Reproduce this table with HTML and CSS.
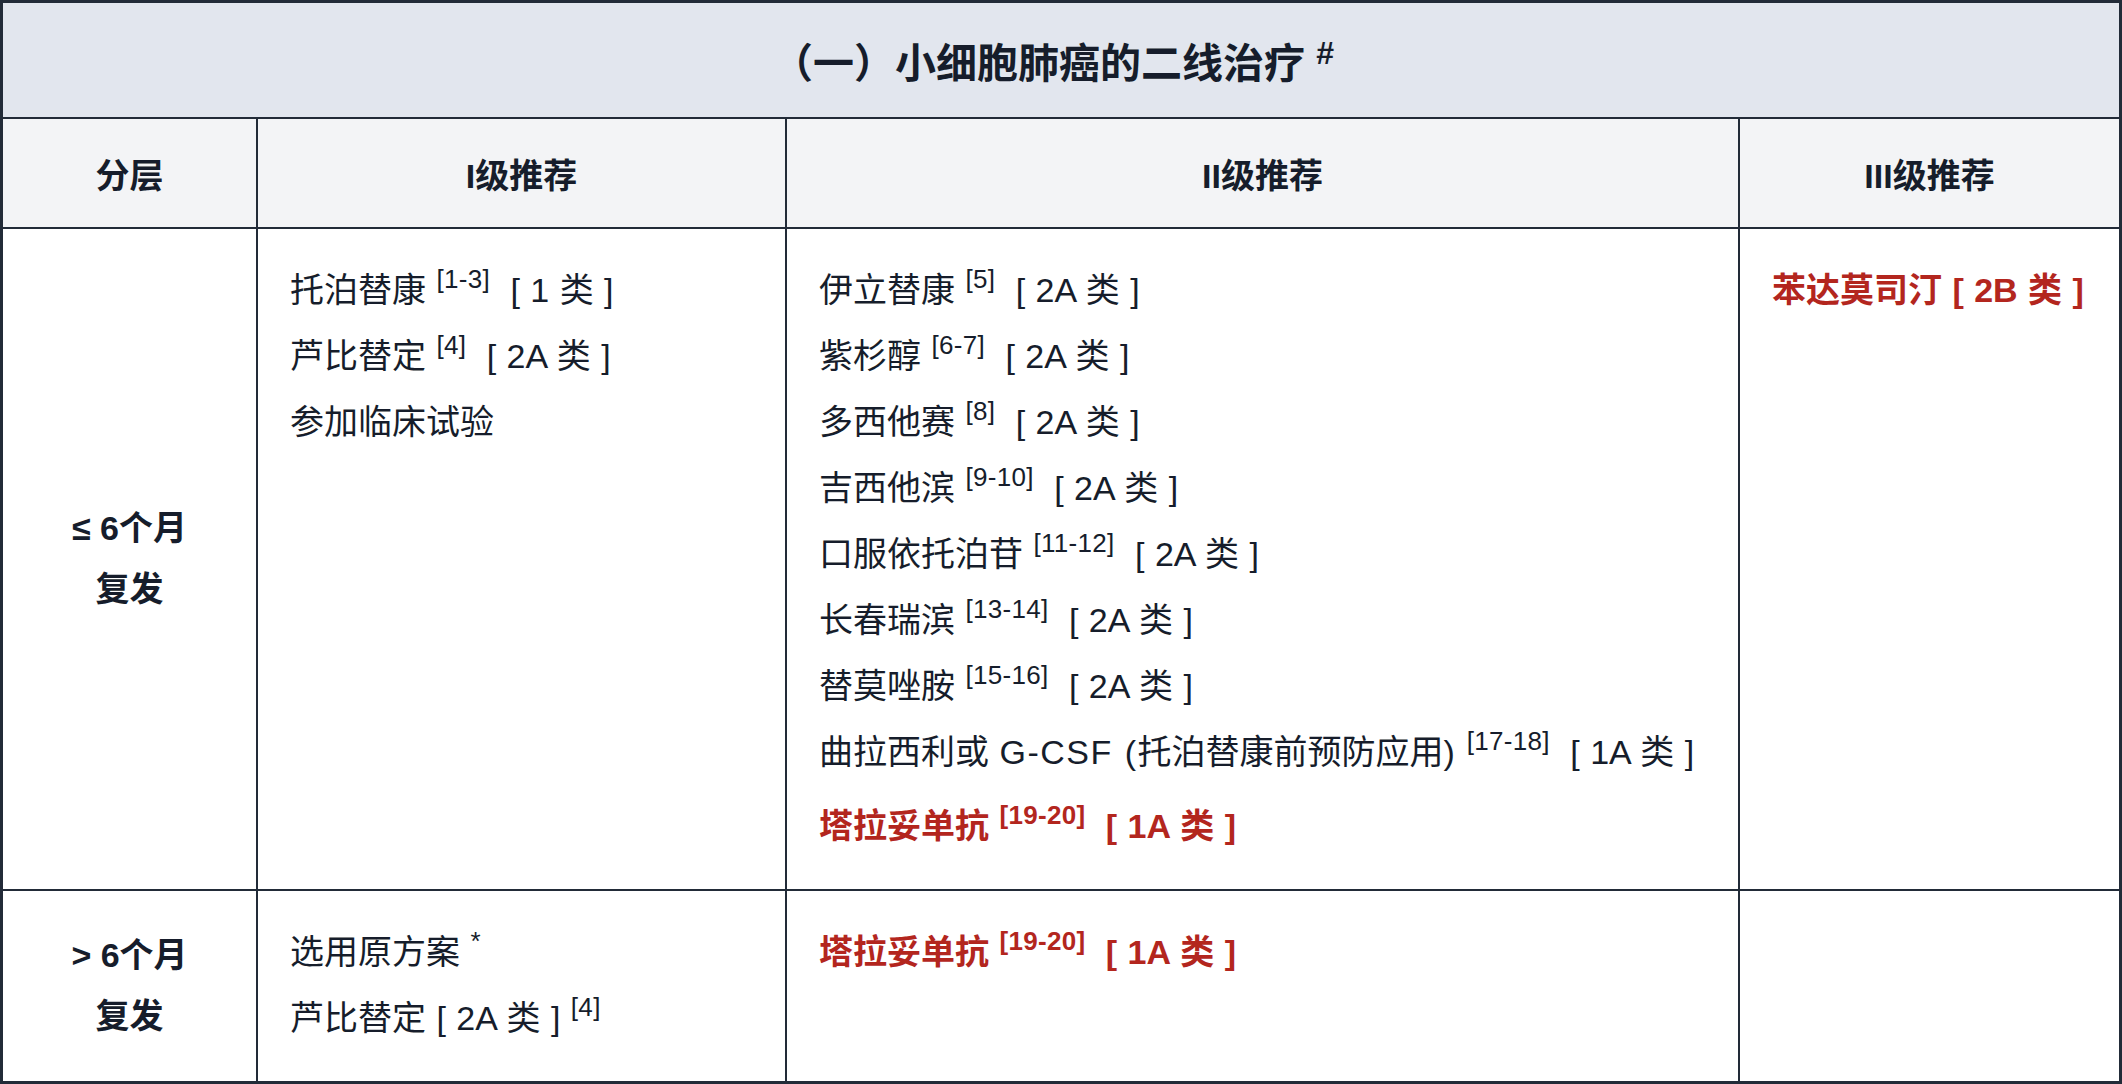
FILE: index.html
```html
<!DOCTYPE html>
<html lang="zh-CN">
<head>
<meta charset="utf-8">
<title>小细胞肺癌的二线治疗</title>
<link rel="stylesheet" href="styles.css">
</head>
<body>
<table class="rec">
  <colgroup>
    <col class="c1"><col class="c2"><col class="c3"><col class="c4">
  </colgroup>
  <thead>
    <tr class="title-row">
      <th colspan="4" class="title">（一）小细胞肺癌的二线治疗 <sup>#</sup></th>
    </tr>
    <tr class="head-row">
      <th>分层</th>
      <th>I级推荐</th>
      <th>II级推荐</th>
      <th>III级推荐</th>
    </tr>
  </thead>
  <tbody>
    <tr>
      <td class="strat"><div class="sl">≤ 6个月</div><div class="sl">复发</div></td>
      <td class="list">
        <div class="item">托泊替康 <sup>[1-3]</sup> [ 1 类 ]</div>
        <div class="item">芦比替定 <sup>[4]</sup> [ 2A 类 ]</div>
        <div class="item">参加临床试验</div>
      </td>
      <td class="list">
        <div class="item">伊立替康 <sup>[5]</sup> [ 2A 类 ]</div>
        <div class="item">紫杉醇 <sup>[6-7]</sup> [ 2A 类 ]</div>
        <div class="item">多西他赛 <sup>[8]</sup> [ 2A 类 ]</div>
        <div class="item">吉西他滨 <sup>[9-10]</sup> [ 2A 类 ]</div>
        <div class="item">口服依托泊苷 <sup>[11-12]</sup> [ 2A 类 ]</div>
        <div class="item">长春瑞滨 <sup>[13-14]</sup> [ 2A 类 ]</div>
        <div class="item">替莫唑胺 <sup>[15-16]</sup> [ 2A 类 ]</div>
        <div class="item">曲拉西利或 <span class="lat">G-CSF (</span>托泊替康前预防应用<span class="lat">)</span> <sup>[17-18]</sup> [ 1A 类 ]</div>
        <div class="item hl">塔拉妥单抗 <sup>[19-20]</sup> [ 1A 类 ]</div>
      </td>
      <td class="list">
        <div class="item hl">苯达莫司汀 [ 2B 类 ]</div>
      </td>
    </tr>
    <tr>
      <td class="strat"><div class="sl">&gt; 6个月</div><div class="sl">复发</div></td>
      <td class="list">
        <div class="item">选用原方案 <sup>*</sup></div>
        <div class="item">芦比替定 [ 2A 类 ] <sup>[4]</sup></div>
      </td>
      <td class="list">
        <div class="item hl">塔拉妥单抗 <sup>[19-20]</sup> [ 1A 类 ]</div>
      </td>
      <td class="list"></td>
    </tr>
  </tbody>
</table>
</body>
</html>
```

FILE: styles.css
```css
* {
  box-sizing: border-box;
}

html, body {
  margin: 0;
  padding: 0;
  background: #ffffff;
}

body {
  font-family: "Liberation Sans", "Noto Sans CJK SC", sans-serif;
  color: #161d2b;
}

.rec {
  width: 2122px;
  table-layout: fixed;
  border-collapse: separate;
  border-spacing: 0;
  border: 3px solid #222b38;
}

.c1 { width: 255px; }
.c2 { width: 529px; }
.c3 { width: 953px; }
.c4 { width: 379px; }

.rec th,
.rec td {
  border-right: 2px solid #222b38;
  border-bottom: 2px solid #222b38;
  padding: 0;
}

.rec th:last-child,
.rec td:last-child {
  border-right: none;
}

.rec tbody tr:last-child td {
  border-bottom: none;
}

.title-row .title {
  height: 116px;
  background: #e2e6ee;
  font-size: 41px;
  font-weight: 700;
  text-align: center;
  vertical-align: middle;
  padding-right: 16px;
}

.title sup {
  font-size: 32px;
  line-height: 0;
  vertical-align: 14px;
}

.head-row th {
  height: 110px;
  background: #f3f4f6;
  font-size: 34px;
  font-weight: 700;
  text-align: center;
  vertical-align: middle;
}

.strat {
  text-align: center;
  vertical-align: middle;
  font-size: 34px;
  font-weight: 600;
}

.sl {
  line-height: 61px;
}

.list {
  vertical-align: top;
  padding: 28px 20px 30px 32px !important;
  font-size: 34px;
}

.item {
  line-height: 66px;
  white-space: nowrap;
  word-spacing: 1px;
}

.item sup {
  font-size: 26px;
  line-height: 0;
  vertical-align: 14px;
  letter-spacing: 0.3px;
  margin-right: 10px;
}

.lat {
  letter-spacing: 1.5px;
}

.hl {
  color: #b3261e;
  font-weight: 600;
}

.item + .hl {
  margin-top: 8px;
}
```
